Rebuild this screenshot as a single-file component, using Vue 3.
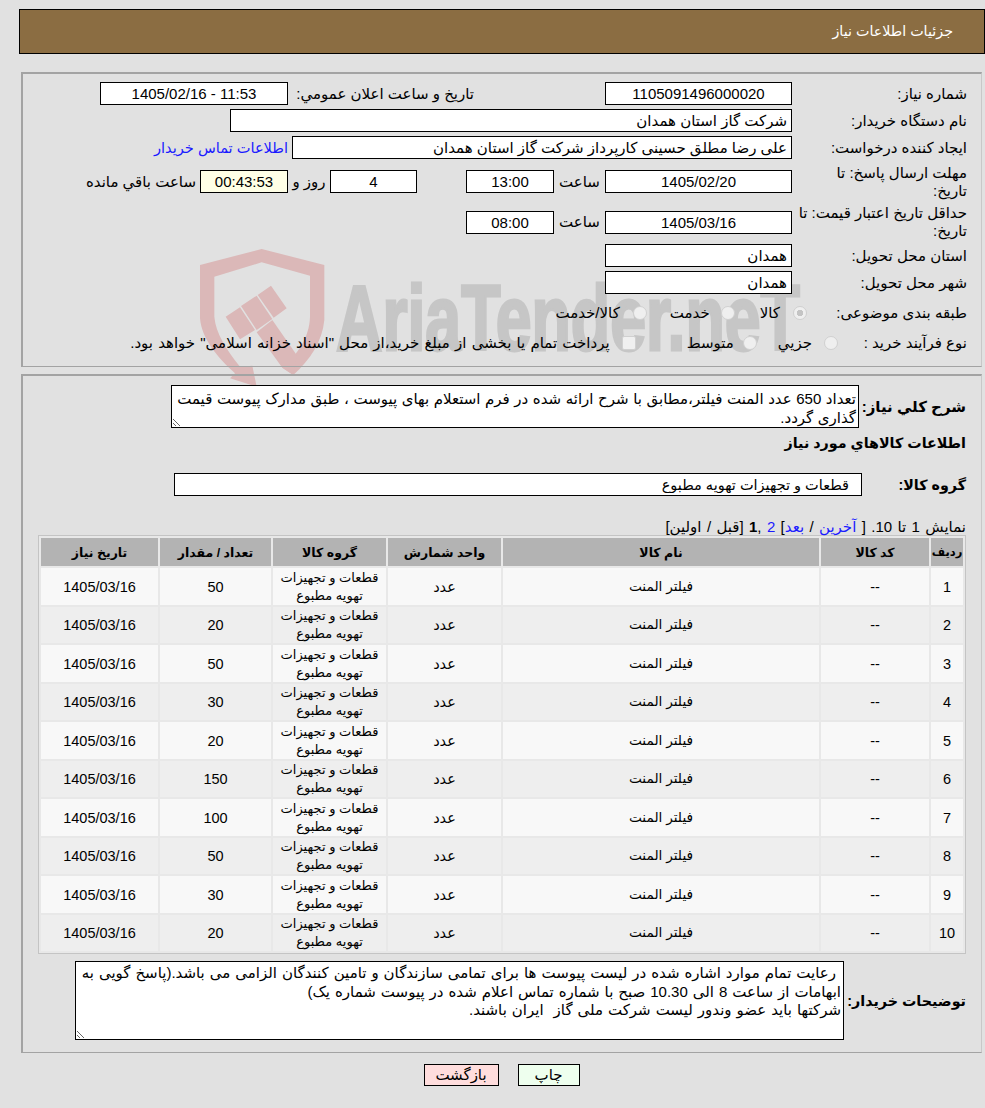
<template>
  <div class="page" dir="rtl">
    <div class="watermark" aria-hidden="true">
      <svg class="shield" viewBox="0 0 420 435" width="140" height="145">
        <path d="M15 60 L200 12 L388 60 L388 225 C382 290 345 345 295 390 L262 368 C305 330 343 280 345 215 L345 92 L200 52 L58 95 L58 215 C62 265 95 315 135 365 L172 362 L185 425 L105 400 L120 385 C65 335 20 280 15 220 Z" />
        <path d="M185 262 L232 225 L305 330 L295 390 L262 368 Z" />
        <path d="M92 215 L135 187 L180 255 L135 283 Z M138 183 L185 152 L232 222 L185 255 Z M188 150 L228 122 L275 190 L236 218 Z" />
      </svg>
      <span class="wm-text">AriaTender.neT</span>
    </div>

    <div class="content">
      <header class="title-bar">جزئیات اطلاعات نیاز</header>

      <section class="panel panel-info">
        <div class="form-grid">
          <label class="lbl">شماره نیاز:</label>
          <input class="box center" readonly value="1105091496000020" />
          <div class="announce">تاریخ و ساعت اعلان عمومي:</div>
          <input class="box center stamp" readonly value="11:53 - 1405/02/16" />

          <label class="lbl">نام دستگاه خریدار:</label>
          <div class="full"><input class="box buyer" readonly value="شرکت گاز استان همدان" /></div>

          <label class="lbl">ایجاد کننده درخواست:</label>
          <div class="full creator">
            <input class="box requester" readonly value="علی رضا مطلق حسینی کارپرداز شرکت گاز استان همدان" />
            <a class="contact" href="#">اطلاعات تماس خریدار</a>
          </div>

          <label class="lbl">مهلت ارسال پاسخ: تا<br />تاریخ:</label>
          <input class="box center" readonly value="1405/02/20" />
          <div class="mid-label">ساعت</div>
          <input class="box center" readonly value="13:00" />
          <input class="box center days" readonly value="4" />
          <div class="mid-label">روز و</div>
          <input class="box center timer" readonly value="00:43:53" />
          <div class="remain">ساعت باقي مانده</div>

          <label class="lbl">حداقل تاریخ اعتبار قیمت: تا<br />تاریخ:</label>
          <input class="box center" readonly value="1405/03/16" />
          <div class="mid-label">ساعت</div>
          <input class="box center" readonly value="08:00" />

          <label class="lbl">استان محل تحویل:</label>
          <input class="box" readonly value="همدان" />

          <label class="lbl">شهر محل تحویل:</label>
          <input class="box" readonly value="همدان" />
        </div>

        <div class="choice-row first">
          <span class="choice-lbl">طبقه بندی موضوعی:</span>
          <input class="radio on" type="radio" disabled checked />
          <span class="opt opt-kala">کالا</span>
          <input class="radio" type="radio" disabled />
          <span class="opt opt-service">خدمت</span>
          <input class="radio" type="radio" disabled />
          <span class="opt opt-both">کالا/خدمت</span>
        </div>
        <div class="choice-row second">
          <span class="choice-lbl">نوع فرآیند خرید :</span>
          <input class="radio" type="radio" disabled />
          <span class="opt opt-partial">جزيي</span>
          <input class="radio" type="radio" disabled />
          <span class="opt opt-medium">متوسط</span>
          <input class="check" type="checkbox" disabled />
          <span class="opt opt-treasury">پرداخت تمام یا بخشی از مبلغ خرید،از محل "اسناد خزانه اسلامی" خواهد بود.</span>
        </div>
      </section>

      <section class="panel panel-goods">
        <div class="desc-row">
          <span class="bold-lbl desc-lbl">شرح كلي نياز:</span>
          <textarea class="area area-desc" readonly :value="description"></textarea>
        </div>
        <h3 class="bold-lbl goods-title">اطلاعات كالاهاي مورد نياز</h3>
        <div class="group-row">
          <span class="bold-lbl group-lbl">گروه کالا:</span>
          <input class="box group-box" readonly value="قطعات و تجهیزات تهویه مطبوع" />
        </div>
        <div class="pager">
          نمایش 1 تا 10. [ <a href="#">آخرین</a> / <a href="#">بعد</a>] <a href="#">2</a> ,<b>1</b> [قبل / اولین]
        </div>
        <table class="items">
          <thead>
            <tr>
              <th class="c-row">ردیف</th>
              <th class="c-code">کد کالا</th>
              <th class="c-name">نام کالا</th>
              <th class="c-unit">واحد شمارش</th>
              <th class="c-group">گروه کالا</th>
              <th class="c-qty">تعداد / مقدار</th>
              <th class="c-date">تاریخ نیاز</th>
            </tr>
          </thead>
          <tbody>
            <tr v-for="(qty, i) in quantities" :key="i">
              <td>{{ i + 1 }}</td>
              <td>--</td>
              <td class="td-name">فیلتر المنت</td>
              <td>عدد</td>
              <td class="td-group">قطعات و تجهیزات تهویه مطبوع</td>
              <td>{{ qty }}</td>
              <td>1405/03/16</td>
            </tr>
          </tbody>
        </table>
        <div class="notes-row">
          <span class="bold-lbl notes-lbl">توضیحات خریدار:</span>
          <textarea class="area area-notes" readonly :value="notes"></textarea>
        </div>
      </section>

      <div class="actions">
        <button class="btn print">چاپ</button>
        <button class="btn back">بازگشت</button>
      </div>
    </div>
  </div>
</template>

<script setup>
const quantities = [50, 20, 50, 30, 20, 150, 100, 50, 30, 20]

const description = 'تعداد 650 عدد المنت فیلتر،مطابق با شرح ارائه شده در فرم استعلام بهای پیوست ، طبق مدارک پیوست قیمت گذاری گردد.'

const notes = ' رعایت تمام موارد اشاره شده در لیست پیوست ها برای تمامی سازندگان و تامین کنندگان الزامی می باشد.(پاسخ گویی به ابهامات از ساعت 8 الی 10.30 صبح با شماره تماس اعلام شده در پیوست شماره یک)\nشرکتها باید عضو وندور لیست شرکت ملی گاز  ایران باشند.'
</script>

<style>
html, body {
  margin: 0;
  background: #e1e1e1;
}
</style>

<style scoped>
.page {
  position: relative;
  width: 985px;
  height: 1108px;
  overflow: hidden;
  font-family: "Liberation Sans", "DejaVu Sans", sans-serif;
  font-size: 15px;
  color: #000;
}

.watermark {
  position: absolute;
  left: 195px;
  top: 245px;
  width: 625px;
  height: 145px;
}

.shield {
  position: absolute;
  left: 0;
  top: 0;
  fill: #dbb8b8;
}

.wm-text {
  position: absolute;
  right: 20px;
  top: 28px;
  font-family: "Liberation Sans", sans-serif;
  font-size: 92px;
  font-weight: 700;
  line-height: 90px;
  color: #c6c6c6;
  -webkit-text-stroke: 3px #c6c6c6;
  white-space: nowrap;
  direction: ltr;
  transform: scaleX(0.7);
  transform-origin: right top;
}

.content {
  position: relative;
  z-index: 1;
  padding-top: 9px;
}

.title-bar {
  box-sizing: border-box;
  width: 966px;
  height: 45px;
  margin-left: 19px;
  padding-right: 31px;
  font-size: 14.3px;
  line-height: 43px;
  background: #8b6d42;
  border: 1px solid #000;
  color: #fff;
}

.panel {
  box-sizing: border-box;
  width: 961px;
  margin-left: 21px;
  margin-right: 3px;
  border: 1px solid #a3a3a3;
  border-left-width: 2px;
  border-right-color: #c8c8c8;
  border-top-width: 2px;
}

.panel-info {
  height: 295px;
  margin-top: 18px;
  padding: 8px 14px 0 0;
}

.panel-goods {
  height: 679px;
  margin-top: 7px;
  padding: 9px 15px 0 0;
}

.form-grid {
  display: grid;
  grid-template-columns: 175px 187px 51px 88px 49px 87px 42px 88px 100px;
  grid-template-rows: 23px 23px 23px 37px 36px 23px 23px;
  row-gap: 4px;
  align-items: center;
}

.lbl {
  grid-column: 1;
  line-height: 18px;
}

.box {
  box-sizing: border-box;
  display: block;
  width: 100%;
  height: 23px;
  margin: 0;
  padding: 0 4px;
  border: 1px solid #000;
  border-radius: 0;
  outline: none;
  background: #fff;
  font: inherit;
  color: #000;
  text-align: right;
}

.center {
  text-align: center;
}

.announce {
  grid-column: 3 / 8;
  padding-right: 131px;
  white-space: nowrap;
}

.stamp {
  grid-column: 8 / 10;
  width: 188px;
}

.days {
  grid-column: 6;
}

.timer {
  background: #ffffe6;
}

.full {
  grid-column: 2 / 10;
}

.buyer {
  width: 562px;
}

.creator {
  display: flex;
  align-items: center;
  gap: 4px;
}

.requester {
  width: 500px;
}

.contact {
  color: #1a1aff;
  font-size: 14.6px;
  text-decoration: none;
  white-space: nowrap;
}

.mid-label {
  text-align: center;
  white-space: nowrap;
}

.remain {
  padding-right: 4px;
  white-space: nowrap;
}

.choice-row {
  display: flex;
  align-items: center;
  height: 22px;
  margin-top: 8px;
}

.choice-lbl {
  flex: none;
  white-space: nowrap;
}

.first .choice-lbl {
  width: 160px;
}

.second .choice-lbl {
  width: 129px;
}

.radio, .check {
  appearance: none;
  box-sizing: border-box;
  flex: none;
  width: 14px;
  height: 14px;
  margin: 0;
  background: #efefef;
  border: 1px solid #d0d0d0;
}

.radio {
  border-radius: 50%;
}

.radio.on {
  background: radial-gradient(circle, #c4c4c4 0 3px, #efefef 3.5px);
}

.check {
  border-radius: 2px;
  background: #f0f0f0;
}

.opt {
  white-space: nowrap;
}

.opt-kala {
  margin: 0 13px 0 25px;
}

.opt-service {
  margin: 0 11px 0 23px;
}

.opt-both {
  margin-right: 13px;
}

.opt-partial {
  margin: 0 12px 0 21px;
}

.opt-medium {
  margin: 0 9px 0 51px;
}

.opt-treasury {
  margin-right: 12px;
  word-spacing: 1px;
}

.bold-lbl {
  font-size: 14.3px;
  font-weight: 700;
  line-height: 20px;
  white-space: nowrap;
}

.desc-row {
  display: flex;
  align-items: center;
}

.desc-lbl {
  width: 107px;
  font-size: 15px;
}

.area {
  box-sizing: border-box;
  display: block;
  margin: 0;
  padding: 3px 2px 0;
  border: 1px solid #000;
  border-radius: 0;
  outline: none;
  background: #fff;
  font: inherit;
  line-height: 19px;
  color: #000;
  overflow: hidden;
  resize: both;
}

.area-desc {
  width: 688px;
  height: 43px;
  word-spacing: 0.4px;
}

.goods-title {
  margin: 5px 0 0;
}

.group-row {
  display: flex;
  align-items: center;
  margin-top: 20px;
}

.group-lbl {
  width: 104px;
}

.group-box {
  width: 688px;
  padding-right: 12px;
  font-size: 14.5px;
}

.pager {
  margin-top: 22px;
  line-height: 17px;
  white-space: nowrap;
  word-spacing: 1.2px;
}

.pager a {
  color: #1a1aff;
  text-decoration: none;
}

.items {
  width: 928px;
  table-layout: fixed;
  border-collapse: separate;
  border-spacing: 2px;
  border: 1px solid #c4c4c4;
  background: #e8e8e8;
  font-size: 14.5px;
  text-align: center;
}

.items th {
  height: 28px;
  padding: 0;
  background: #b3b3b3;
  font-size: 12.5px;
  font-weight: 700;
}

.items th.c-row {
  font-size: 11.5px;
}

.items td {
  height: 36px;
  padding: 0.5px 0 0;
  line-height: 18px;
}

.items .td-name {
  font-size: 13.7px;
}

.items .td-group {
  font-size: 13px;
}

.items tbody tr:nth-child(odd) td {
  background: #f8f8f8;
}

.items tbody tr:nth-child(even) td {
  background: #eeeeee;
}

.c-row { width: 32px; }
.c-code { width: 108px; }
.c-name { width: 316px; }
.c-unit { width: 113px; }
.c-group { width: 113px; }
.c-qty { width: 111px; }
.c-date { width: 117px; }

.notes-row {
  display: flex;
  align-items: center;
  margin-top: 7px;
}

.notes-lbl {
  width: 122px;
}

.area-notes {
  width: 769px;
  height: 79px;
  padding: 2px 2px 0;
  line-height: 18.5px;
  word-spacing: 0.8px;
}

.actions {
  display: flex;
  justify-content: center;
  gap: 19px;
  margin-top: 11px;
  padding-left: 18px;
}

.btn {
  box-sizing: border-box;
  height: 22px;
  padding: 0;
  border: 1px solid #000;
  border-radius: 0;
  font: inherit;
  color: #000;
}

.print {
  width: 62px;
  background: #eeffee;
}

.back {
  width: 75px;
  background: #ffdddd;
}
</style>
